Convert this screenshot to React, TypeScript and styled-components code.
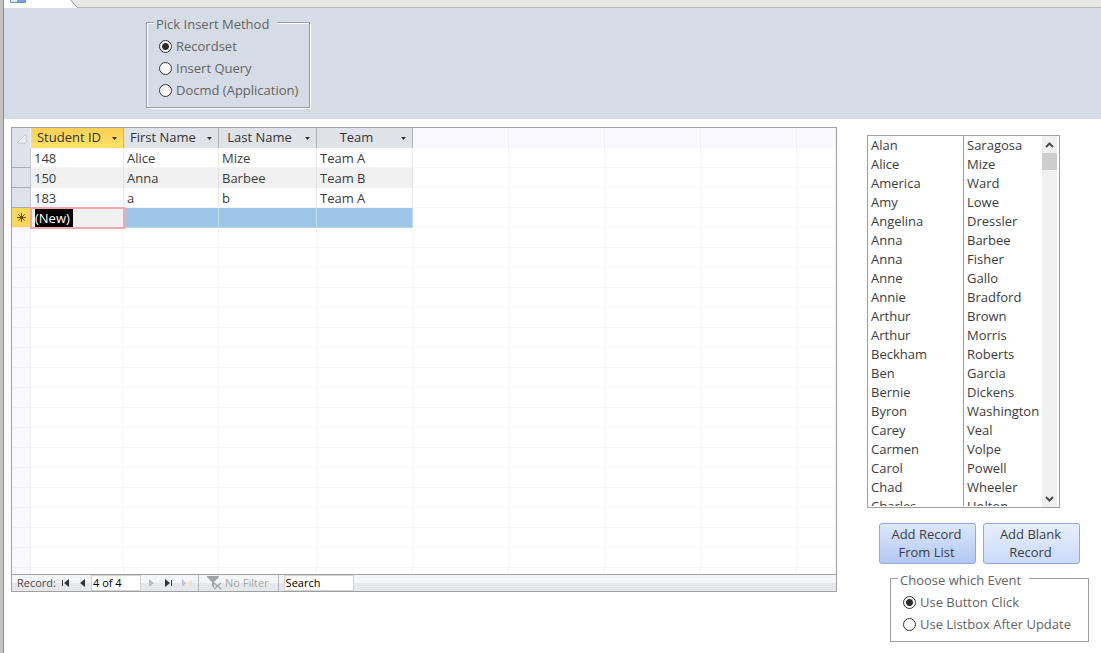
import React, { useState } from "react";
import styled, { createGlobalStyle } from "styled-components";

const GlobalStyle = createGlobalStyle`
  * { box-sizing: border-box; }
  body {
    margin: 0;
    background: #fff;
    color: #3c3c3c;
    font: 13px/20px "Open Sans", "Noto Sans", sans-serif;
  }
  button, input { font: inherit; color: inherit; }
`;

const Page = styled.div`
  display: flex;
  min-height: 100vh;
  border-left: 3px solid #c3c3c3;
`;

const FormWindow = styled.div`
  flex: 1;
  min-width: 0;
  border-left: 1px solid #8a8a8a;
`;

const TabStrip = styled.div`
  height: 8px;
  background: #e7e7e6;
  border-bottom: 1px solid #b4b6b8;
`;

const TabShape = styled.svg`
  display: block;
`;

const FormHeader = styled.header`
  display: flex;
  height: 111px;
  padding: 6px 0 0 142px;
  background: #d6dce5;
`;

const OptionFrame = styled.fieldset<{ $surface: string; $width: number }>`
  align-self: flex-start;
  width: ${(p) => p.$width}px;
  margin: 0;
  padding: 4px 0 6px 12px;
  border: 1px solid #9a9da3;
  box-shadow: 1px 1px 0 #fff, inset 1px 1px 0 #fff;
  color: #646464;

  legend {
    height: 17px;
    margin-left: -5px;
    padding: 0 8px 0 2px;
    background: ${(p) => p.$surface};
  }
`;

const Option = styled.label`
  display: flex;
  align-items: center;
  gap: 4px;
  height: 22px;
  white-space: nowrap;
`;

const Radio = styled.input`
  appearance: none;
  flex: none;
  width: 13px;
  height: 13px;
  margin: 0;
  border: 1px solid #333;
  border-radius: 50%;
  background: #fff;

  &:checked {
    background: radial-gradient(circle, #2b2b2b 3px, #fff 4px);
  }
`;

const FormBody = styled.main`
  display: flex;
  align-items: flex-start;
  gap: 30px;
  padding: 8px 12px 11px 7px;
`;

const Datasheet = styled.section`
  flex: 1;
  min-width: 0;
  border: 1px solid #a0a0a0;
`;

const GridViewport = styled.div`
  height: 446px;
  overflow: hidden;
`;

const Grid = styled.table`
  width: 100%;
  table-layout: fixed;
  border-collapse: separate;
  border-spacing: 0;
`;

const HeadCell = styled.th<{ $active?: boolean }>`
  height: 20px;
  padding: 0;
  font-weight: normal;
  color: #333;
  background: ${(p) => (p.$active ? "linear-gradient(#f8d156, #ffe066)" : "#dfe2e8")};
  border-right: 1px solid #b0b5bc;
`;

const HeadContent = styled.div`
  display: flex;
  align-items: center;
  height: 20px;
  padding-right: 5px;

  span {
    flex: 1;
    padding-right: 4px;
    text-align: center;
    line-height: 18px;
    padding-bottom: 2px;
    white-space: nowrap;
  }
`;

const MenuButton = styled.button`
  display: flex;
  padding: 0;
  border: 0;
  background: none;
`;

const Corner = styled.th`
  height: 20px;
  padding: 0;
  background: #dfe2e8;
  border-right: 1px solid #f2f3f5;

  svg { display: block; margin: 0 0 0 4px; }
`;

const EmptyHead = styled.td`
  padding: 0;
  background: #f8f8fe;
  border-right: 1px solid #f1f1f6;
`;

const Selector = styled.th<{ $state: "row" | "new" | "empty" }>`
  height: 20px;
  padding: 0;
  background: ${(p) => ({ row: "#dfe2e8", new: "#fbd75b", empty: "#f8f8fe" })[p.$state]};
  border-right: 1px solid ${(p) => (p.$state === "empty" ? "#f3f3f6" : "#c6cad0")};
  border-bottom: 1px solid ${(p) => (p.$state === "row" ? "#a9adb3" : "#f0f0f5")};

  svg { display: block; margin: 0 auto; }
`;

const cellColors = {
  plain: { fill: "#fff", side: "#ebebeb", bottom: "#f5f5f5" },
  alt: { fill: "#f1f1f1", side: "#e2e2e2", bottom: "#f1f1f1" },
  selected: { fill: "#9dc6e8", side: "#c3ddf0", bottom: "#b6d4ec" },
  empty: { fill: "#fff", side: "#f5f5f5", bottom: "#f7f7f7" },
};

const Cell = styled.td<{ $kind: keyof typeof cellColors }>`
  height: 20px;
  padding: 1px 0 0 3px;
  line-height: 18px;
  white-space: nowrap;
  background: ${(p) => cellColors[p.$kind].fill};
  border-right: 1px solid ${(p) => cellColors[p.$kind].side};
  border-bottom: 1px solid ${(p) => cellColors[p.$kind].bottom};
`;

const ActiveCell = styled.td`
  height: 20px;
  padding: 0 0 0 4px;
  background: #f1f1f1;
  outline: 2px solid #f2a9ad;
  outline-offset: -1px;

  mark {
    display: block;
    width: 38px;
    height: 18px;
    line-height: 18px;
    color: #fff;
    background: #000;
  }
`;

const NavBar = styled.div`
  display: flex;
  align-items: center;
  height: 17px;
  padding-left: 5px;
  border-top: 1px solid #a0a0a0;
  background: linear-gradient(#f4f5f9 50%, #e5e7eb 50%);
  font-size: 11px;
  line-height: 16px;
  white-space: nowrap;
`;

const NavLabel = styled.label`
  width: 41px;
  color: #4a4a4a;
`;

const NavButton = styled.button<{ $width: number }>`
  display: flex;
  align-items: center;
  justify-content: center;
  width: ${(p) => p.$width}px;
  height: 16px;
  padding: 0;
  border: 0;
  background: none;
`;

const NavInput = styled.input<{ $width: number }>`
  width: ${(p) => p.$width}px;
  height: 16px;
  padding: 0 1px;
  border: 1px solid #d0d2d6;
  background: #fff;
  color: #000;

  &::placeholder { color: #000; opacity: 1; }
`;

const FilterButton = styled.button`
  display: flex;
  align-items: center;
  gap: 3px;
  height: 16px;
  margin-right: 5px;
  padding: 0 9px 0 8px;
  border: solid #b4b6ba;
  border-width: 0 1px;
  background: none;
  color: #a6a6a6;
`;

const SidePanel = styled.aside`
  flex: none;
  width: 222px;
  padding-top: 8px;
`;

const ListBox = styled.div`
  display: flex;
  width: 193px;
  height: 373px;
  padding-right: 2px;
  border: 1px solid #9f9f9f;
  overflow: hidden;
`;

const NameViewport = styled.div`
  flex: 1;
  height: 370px;
  overflow: hidden;
`;

const NameTable = styled.table`
  width: 174px;
  table-layout: fixed;
  border-collapse: separate;
  border-spacing: 0;

  td {
    height: 19px;
    padding: 0 0 0 3px;
    line-height: 19px;
    white-space: nowrap;
  }
  td:first-child { width: 96px; border-right: 1px solid #9f9f9f; }
`;

const ScrollTrack = styled.div`
  display: flex;
  flex-direction: column;
  width: 15px;
  background: #f0f0f0;
`;

const ScrollButton = styled.button`
  display: flex;
  align-items: center;
  justify-content: center;
  height: 17px;
  padding: 0;
  border: 0;
  background: none;
`;

const ScrollThumb = styled.div`
  height: 17px;
  margin-bottom: auto;
  background: #cdcdcd;
`;

const Actions = styled.div`
  display: flex;
  gap: 7px;
  margin: 15px 0 6px 12px;
`;

const ActionButton = styled.button<{ $strong?: boolean }>`
  width: 97px;
  height: 41px;
  padding: 0 10px 2px 8px;
  border: 1px solid #8ea9da;
  border-radius: 3px;
  background: ${(p) => (p.$strong ? "linear-gradient(#dce7fb, #b2c8f3)" : "linear-gradient(#e8effc, #c9dafa)")};
  line-height: 18px;
`;

const EventFrame = styled.div`
  display: flex;
  margin-left: 23px;
`;

const columns = ["Student ID", "First Name", "Last Name", "Team"];
const records = [
  ["148", "Alice", "Mize", "Team A"],
  ["150", "Anna", "Barbee", "Team B"],
  ["183", "a", "b", "Team A"],
];
const emptyColumns = [0, 1, 2, 3, 4];
const blankRows = Array.from({ length: 18 }, (_, i) => i);

const names = [
  ["Alan", "Saragosa"], ["Alice", "Mize"], ["America", "Ward"], ["Amy", "Lowe"],
  ["Angelina", "Dressler"], ["Anna", "Barbee"], ["Anna", "Fisher"], ["Anne", "Gallo"],
  ["Annie", "Bradford"], ["Arthur", "Brown"], ["Arthur", "Morris"], ["Beckham", "Roberts"],
  ["Ben", "Garcia"], ["Bernie", "Dickens"], ["Byron", "Washington"], ["Carey", "Veal"],
  ["Carmen", "Volpe"], ["Carol", "Powell"], ["Chad", "Wheeler"], ["Charles", "Holton"],
];

interface OptionGroupProps {
  title: string;
  name: string;
  options: string[];
  surface: string;
  width: number;
}

function OptionGroup({ title, name, options, surface, width }: OptionGroupProps) {
  const [value, setValue] = useState(options[0]);
  return (
    <OptionFrame $surface={surface} $width={width}>
      <legend>{title}</legend>
      {options.map((option) => (
        <Option key={option}>
          <Radio type="radio" name={name} checked={value === option} onChange={() => setValue(option)} />
          {option}
        </Option>
      ))}
    </OptionFrame>
  );
}

function EmptyCells() {
  return <>{emptyColumns.map((c) => <Cell key={c} $kind="empty" />)}</>;
}

function StudentGrid() {
  return (
    <GridViewport>
      <Grid>
        <colgroup>
          <col width={19} />
          <col width={93} />
          <col width={95} />
          <col width={98} />
          <col width={96} />
          <col width={96} />
          <col width={96} />
          <col width={96} />
          <col width={96} />
          <col />
        </colgroup>
        <thead>
          <tr>
            <Corner aria-label="Select all">
              <svg width="11" height="11" viewBox="0 0 11 11">
                <path d="M10 1V10H1Z" fill="#eef0f3" stroke="#c4c8cd" />
              </svg>
            </Corner>
            {columns.map((title, i) => (
              <HeadCell key={title} $active={i === 0}>
                <HeadContent>
                  <span>{title}</span>
                  <MenuButton aria-label={`${title} menu`}>
                    <svg width="7" height="5" viewBox="0 0 7 5">
                      <path d="M1 1H6L3.5 4Z" fill="#333" />
                    </svg>
                  </MenuButton>
                </HeadContent>
              </HeadCell>
            ))}
            {emptyColumns.map((c) => <EmptyHead key={c} />)}
          </tr>
        </thead>
        <tbody>
          {records.map((record, r) => (
            <tr key={record[0]}>
              <Selector $state="row" />
              {record.map((value, c) => (
                <Cell key={c} $kind={r % 2 ? "alt" : "plain"}>{value}</Cell>
              ))}
              <EmptyCells />
            </tr>
          ))}
          <tr>
            <Selector $state="new" aria-label="New record">
              <svg width="11" height="11" viewBox="0 0 11 11" stroke="#5c4d22">
                <path d="M5.5 1V10M1 5.5H10M2.3 2.3L8.7 8.7M8.7 2.3L2.3 8.7" />
              </svg>
            </Selector>
            <ActiveCell><mark>(New)</mark></ActiveCell>
            <Cell $kind="selected" />
            <Cell $kind="selected" />
            <Cell $kind="selected" />
            <EmptyCells />
          </tr>
          {blankRows.map((r) => (
            <tr key={r}>
              <Selector $state="empty" />
              {columns.map((c) => <Cell key={c} $kind="empty" />)}
              <EmptyCells />
            </tr>
          ))}
        </tbody>
      </Grid>
    </GridViewport>
  );
}

function RecordNavigation() {
  return (
    <NavBar>
      <NavLabel htmlFor="record">Record:</NavLabel>
      <NavButton $width={16} aria-label="First record">
        <svg width="8" height="8" viewBox="0 0 8 8" fill="#333"><path d="M0 1H1V7H0ZM7 0V8L2 4Z" /></svg>
      </NavButton>
      <NavButton $width={17} aria-label="Previous record">
        <svg width="5" height="8" viewBox="0 0 5 8" fill="#333"><path d="M5 0V8L0 4Z" /></svg>
      </NavButton>
      <NavInput id="record" $width={50} defaultValue="4 of 4" />
      <NavButton $width={20} aria-label="Next record">
        <svg width="5" height="8" viewBox="0 0 5 8" fill="#b9bbbf"><path d="M0 0V8L5 4Z" /></svg>
      </NavButton>
      <NavButton $width={16} aria-label="Last record">
        <svg width="8" height="8" viewBox="0 0 8 8" fill="#333"><path d="M0 0V8L5 4ZM6 1H7V7H6Z" /></svg>
      </NavButton>
      <NavButton $width={21} aria-label="New record">
        <svg width="12" height="8" viewBox="0 0 12 8">
          <path d="M0 0V8L4 4Z" fill="#c3c4c6" />
          <path d="M8.5 1V7M5.5 4H11.5M6.5 2L10.5 6M10.5 2L6.5 6" stroke="#efe0cb" />
        </svg>
      </NavButton>
      <FilterButton>
        <svg width="15" height="14" viewBox="0 0 15 14">
          <path d="M0 0H12V1L7 6V12L5 10V6L0 1Z" fill="#a3a3a3" />
          <path d="M7 7L14 13M14 7L7 13" stroke="#a3a3a3" strokeWidth="1.5" />
        </svg>
        No Filter
      </FilterButton>
      <NavInput $width={70} placeholder="Search" aria-label="Search" />
    </NavBar>
  );
}

function NameList() {
  return (
    <ListBox>
      <NameViewport>
        <NameTable>
          <tbody>
            {names.map(([first, last]) => (
              <tr key={first + last}>
                <td>{first}</td>
                <td>{last}</td>
              </tr>
            ))}
          </tbody>
        </NameTable>
      </NameViewport>
      <ScrollTrack>
        <ScrollButton aria-label="Scroll up">
          <svg width="9" height="6" viewBox="0 0 9 6" fill="none" stroke="#4d4d4d" strokeWidth="2">
            <path d="M1 5L4.5 1.5L8 5" />
          </svg>
        </ScrollButton>
        <ScrollThumb />
        <ScrollButton aria-label="Scroll down">
          <svg width="9" height="6" viewBox="0 0 9 6" fill="none" stroke="#4d4d4d" strokeWidth="2">
            <path d="M1 1L4.5 4.5L8 1" />
          </svg>
        </ScrollButton>
      </ScrollTrack>
    </ListBox>
  );
}

export default function App() {
  return (
    <Page>
      <GlobalStyle />
      <FormWindow>
        <TabStrip>
          <TabShape width="80" height="8" viewBox="0 0 80 8">
            <path d="M0 0H67Q70 5 74 8H0Z" fill="#fff" />
            <path d="M67 0Q70 5 74 8" fill="none" stroke="#9b9b9b" />
            <path d="M6.5 0V2.5H21.5V0" fill="#dbe6f6" stroke="#6f8db9" />
            <path d="M13 0H21V2H13Z" fill="#7ba3dc" />
          </TabShape>
        </TabStrip>
        <FormHeader>
          <OptionGroup
            title="Pick Insert Method"
            name="method"
            options={["Recordset", "Insert Query", "Docmd (Application)"]}
            surface="#d6dce5"
            width={164}
          />
        </FormHeader>
        <FormBody>
          <Datasheet>
            <StudentGrid />
            <RecordNavigation />
          </Datasheet>
          <SidePanel>
            <NameList />
            <Actions>
              <ActionButton $strong>Add Record From List</ActionButton>
              <ActionButton>Add Blank Record</ActionButton>
            </Actions>
            <EventFrame>
              <OptionGroup
                title="Choose which Event"
                name="event"
                options={["Use Button Click", "Use Listbox After Update"]}
                surface="#fff"
                width={199}
              />
            </EventFrame>
          </SidePanel>
        </FormBody>
      </FormWindow>
    </Page>
  );
}
